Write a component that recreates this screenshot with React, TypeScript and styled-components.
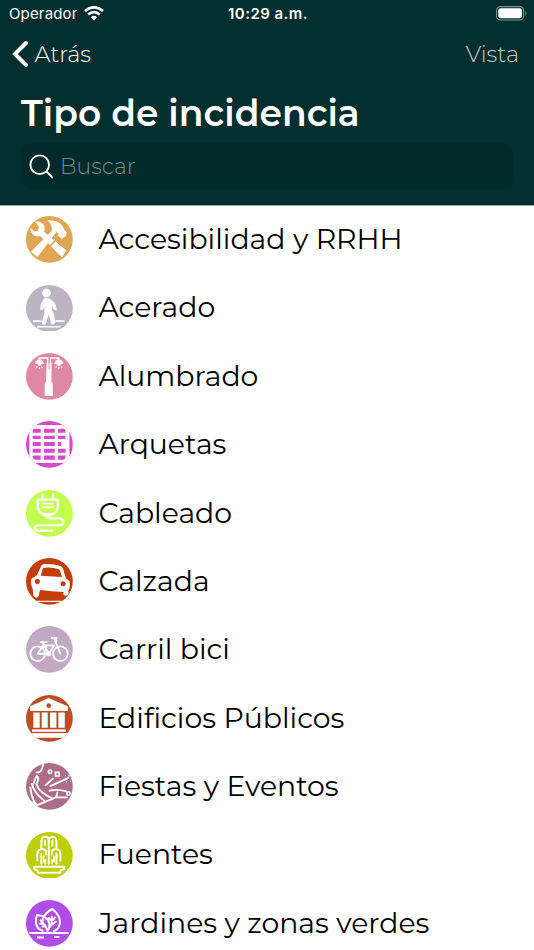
import React from 'react';
import styled, { createGlobalStyle } from 'styled-components';

const GlobalStyle = createGlobalStyle`
  * { box-sizing: border-box; }
  html, body { margin: 0; height: 100%; overflow: hidden; background: #fff; }
  body { font-family: Montserrat, Inter, "Open Sans", sans-serif; color: #000; }
`;

const Screen = styled.div`
  height: 100vh;
  display: flex;
  flex-direction: column;
  overflow: hidden;
`;

const Header = styled.header`
  flex: none;
  height: 206px;
  display: flex;
  flex-direction: column;
  background: #012e2e;
  color: #fff;
  border-bottom: 1px solid #8fa5a4;
`;

const StatusBar = styled.div`
  height: 28px;
  display: grid;
  grid-template-columns: 1fr auto 1fr;
  align-items: center;
  padding: 0 7px 0 9px;
  font-family: Inter, sans-serif;
  font-size: 15px;
  line-height: 28px;
`;

const Carrier = styled.div`
  display: flex;
  align-items: center;
  gap: 6px;
  letter-spacing: 0.15px;
  svg { margin-top: -2px; }
`;

const Clock = styled.time`
  font-weight: 600;
  letter-spacing: 0.44px;
`;

const Battery = styled.svg`
  justify-self: end;
  margin-top: -1px;
`;

const NavBar = styled.nav`
  height: 52px;
  display: flex;
  align-items: center;
  justify-content: space-between;
  padding: 0 15px 0 12px;
`;

const NavButton = styled.button<{ $dim?: boolean }>`
  display: flex;
  align-items: center;
  gap: 5.5px;
  padding: 0;
  border: 0;
  background: none;
  color: ${(p) => (p.$dim ? '#c0cbcb' : '#fff')};
  font: 300 22.5px/28px Montserrat, Inter, sans-serif;
`;

const Title = styled.h1`
  margin: 10px 0 0 21px;
  font-size: 36px;
  font-weight: 600;
  line-height: 46px;
  letter-spacing: 0.04px;
  white-space: nowrap;
`;

const SearchField = styled.label`
  height: 46px;
  margin: 7px 21px 0;
  padding: 2px 0 0 8px;
  display: flex;
  align-items: center;
  gap: 6px;
  border-radius: 10px;
  background: #012b2a;
  font-size: 22px;
  font-weight: 300;
  line-height: 44px;
  color: #748b8a;
  svg { margin-top: -1px; }
`;

const List = styled.ul`
  flex: 1;
  margin: -0.5px 0 0;
  padding: 0;
  list-style: none;
`;

const Row = styled.li`
  height: 68.36px;
  display: flex;
  align-items: center;
  padding-left: 25.8px;
  gap: 25.8px;
`;

const Icon = styled.svg`
  flex: none;
  width: 46.8px;
  height: 46.8px;
  fill: none;
  stroke: #fff;
  stroke-linecap: round;
  stroke-linejoin: round;
`;

const Label = styled.span`
  padding-bottom: 1.2px;
  font-size: 28.3px;
  line-height: 34px;
  font-variant-ligatures: none;
  white-space: nowrap;
`;

interface Category {
  label: string;
  color: string;
  cy: number;
  art: React.ReactNode;
}

const categories: Category[] = [
  {
    label: 'Accesibilidad y RRHH', color: '#dea555', cy: 89,
    art: (
      <g fill="#fff" stroke="none">
        <path d="M60 36Q74 32 84 43Q92 53 87 66L152 122L140 142L119 119L75 79Q62 83 53 74Q45 65 46 55L58 65L69 63L72 51Z" />
        <path d="M102 97L119 88L127 101L154 122L141 142L118 121Z" />
        <path d="M97 32Q122 30 138 44Q147 52 147 61L155 67L152 79L141 87L128 78L130 71L124 67L67 142L48 126L110 63Q113 46 97 32Z" />
        <path d="M125 88L106 108" stroke="#dea555" strokeWidth="5" />
      </g>
    ),
  },
  {
    label: 'Acerado', color: '#bcb4c2', cy: 91,
    art: (
      <g fill="#fff" stroke="none">
        <circle cx="94" cy="45" r="13" />
        <path d="M87 61Q98 56 109 65L119 75Q124 85 125 94Q120 100 115 93L112 83L111 97L117 107L121 133Q115 144 108 136L104 120L100 110L94 134Q88 144 81 137L81 130L88 106L88 84L85 92Q79 99 75 93L78 77Z" />
        <path d="M56 129H78M123 129H147M68 146H134" stroke="#fff" strokeWidth="5" />
      </g>
    ),
  },
  {
    label: 'Alumbrado', color: '#df88a6', cy: 92,
    art: (
      <g fill="#fff" stroke="none">
        <path d="M73 43V37H98V72M131 43V37H106V72" fill="none" stroke="#fff" strokeWidth="5" strokeLinejoin="miter" />
        <path d="M95 52H109V110H113V151H89V110H93Z" />
        <path d="M60 55Q61 43 73 41Q86 43 86 55ZM118 55Q119 43 131 41Q144 43 144 55Z" />
        <path d="M66 55Q73 67 80 55ZM124 55Q131 67 138 55Z" />
        <path d="M66 63L64 66M73 64V68M80 63L82 66M124 63L122 66M131 64V68M138 63L140 66" stroke="#fff" strokeWidth="3" />
        <path d="M102 37V70" stroke="#df88a6" strokeWidth="3" />
      </g>
    ),
  },
  {
    label: 'Arquetas', color: '#d54acb', cy: 89,
    art: (
      <g stroke="none">
        <rect x="43" y="31" width="120" height="114" rx="7" fill="#fff" />
        <path d="M59 42H77V54H53V49Q53 42 59 42M87 42H119V54H87ZM129 42H145Q151 42 151 49V54H129ZM53 63H77V73H53ZM87 63H119V73H87ZM129 63H151V73H129ZM53 82H77V94H53ZM87 82H119V94H87ZM129 82H138V94H129ZM53 102H77V114H53ZM87 102H119V114H87ZM129 102H151V114H129ZM53 122H77V135H60Q53 134 53 127ZM87 122H119V135H87ZM129 122H151V128Q150 135 144 135H129Z" fill="#d54acb" />
      </g>
    ),
  },
  {
    label: 'Cableado', color: '#c2ff4e', cy: 91,
    art: (
      <g strokeWidth="7">
        <path d="M82 34V48M114 34V48" />
        <path d="M68 50H128V72Q126 88 112 93H84Q70 88 68 72Z" />
        <path d="M82 62H114M82 73H114" strokeWidth="5" />
        <path d="M85 94L96 103L111 94" strokeWidth="6" />
        <path d="M98 98Q97 104 106 106H132Q145 107 145 116Q145 126 132 127H70Q59 127 59 134Q59 141 70 143H111" />
      </g>
    ),
  },
  {
    label: 'Calzada', color: '#c43c08', cy: 91,
    art: (
      <g>
        <path d="M76 50Q79 40 89 39Q112 37 136 45Q145 49 147 65L153 82L163 90Q166 109 160 119V130Q151 137 145 130V123Q110 121 75 117L71 134Q64 145 55 135L53 113Q46 102 49 83L65 73Z" fill="#fff" stroke="none" />
        <path d="M84 51Q108 47 131 55Q137 60 140 78L77 74Z" fill="#c43c08" stroke="none" />
        <circle cx="67" cy="91" r="7.5" fill="#c43c08" stroke="none" />
        <circle cx="144" cy="98" r="7.5" fill="#c43c08" stroke="none" />
        <path d="M28 151H172" strokeWidth="4" />
      </g>
    ),
  },
  {
    label: 'Carril bici', color: '#c1a9c4', cy: 90,
    art: (
      <g strokeWidth="5.5">
        <circle cx="68" cy="103" r="22" /><circle cx="136" cy="103" r="22" />
        <path d="M68 103L84 78H118L101 103L82 68M136 103L117 56H110M117 56H124V64M68 103H101M77 68H95M76 83H94" />
        <circle cx="101" cy="103" r="5" fill="#fff" />
      </g>
    ),
  },
  {
    label: 'Edificios Públicos', color: '#bc4d25', cy: 91,
    art: (
      <g fill="#fff" stroke="none">
        <path d="M45 55L101 30L158 55V69H45Z" />
        <path d="M55 73H74V119H55ZM80 73H98V119H80ZM105 73H124V119H105ZM130 73H149V119H130Z" />
        <rect x="51" y="124" width="101" height="7" /><rect x="46" y="135" width="113" height="14" />
        <circle cx="101" cy="53" r="7" fill="#bc4d25" />
      </g>
    ),
  },
  {
    label: 'Fiestas y Eventos', color: '#ad6d88', cy: 89,
    art: (
      <g strokeWidth="5.5">
        <path d="M65 57Q75 62 64 82Q72 108 112 125M50 82Q60 112 87 131M46 92Q48 118 61 141M65 57L54 84M65 146L124 121L156 122M124 119L127 107M103 102Q125 96 153 104M106 88L157 65M91 86L113 66M44 134L64 142M64 47Q82 50 84 22" />
        <circle cx="105" cy="45" r="5" strokeWidth="5" /><circle cx="160" cy="110" r="5" strokeWidth="5" />
        <rect x="121" y="47" width="11" height="11" strokeWidth="5" />
        <path d="M151 56V57M159 63V64M166 73V74M154 75V76M162 57V58M150 68V69" strokeWidth="4" />
      </g>
    ),
  },
  {
    label: 'Fuentes', color: '#bdce05', cy: 91,
    art: (
      <g strokeWidth="6">
        <path d="M79 72V49Q80 35 92 35Q100 36 101 45Q102 36 112 35Q123 36 124 49V72M67 106V87Q68 74 79 72Q89 71 93 79V88M136 106V87Q135 74 124 72Q115 71 110 79V88M101 45V116M90 48V60M112 47V62M79 86V116M124 86V116" />
        <path d="M86 94V109M91 104V116M111 104V116M117 94V109" strokeWidth="5" />
        <path d="M58 125H147V132Q145 134 138 135L135 143H70L66 135Q58 134 58 130Z" />
      </g>
    ),
  },
  {
    label: 'Jardines y zonas verdes', color: '#b04ce8', cy: 91,
    art: (
      <g transform="translate(0 -204)" strokeWidth="6">
        <path d="M83 317Q65 311 63 294Q61 280 66 270Q98 273 103 296Q105 308 97 318M86 276Q94 260 112 252Q138 273 134 297Q130 314 116 318M97 318Q99 307 109 300L122 290M110 299V275M109 287L100 279M110 288L120 277M98 317Q91 298 77 286M83 291V281M86 296H75M92 304H82" />
        <path d="M45 324H158" />
        <path d="M66 337H87M117 336H133" strokeLinecap="butt" />
      </g>
    ),
  },
];

export default function App() {
  return (
    <Screen>
      <GlobalStyle />
      <Header>
        <StatusBar>
          <Carrier>
            Operador
            <svg width="20" height="15" viewBox="0 0 20 15" fill="none" stroke="#fff" strokeWidth="2.7">
              <path d="M1 5Q10 -2.4 19 5M4.2 8.5Q10 3.7 15.8 8.5" />
              <path d="M6.8 11.2Q10 8.5 13.2 11.2L10 14.5Z" fill="#fff" stroke="none" />
            </svg>
          </Carrier>
          <Clock>10:29 a.m.</Clock>
          <Battery width="31" height="15" viewBox="0 0 31 15">
            <rect x="0.6" y="0.6" width="27" height="13.4" rx="3.8" fill="none" stroke="#7d9493" strokeWidth="1.1" />
            <rect x="2.3" y="2.3" width="23.6" height="10" rx="2.3" fill="#fff" />
            <path d="M29.3 5Q31.4 7.4 29.3 10Z" fill="#7d9493" />
          </Battery>
        </StatusBar>
        <NavBar>
          <NavButton>
            <svg width="17" height="28" viewBox="0 0 17 28" fill="none" stroke="#fff" strokeWidth="4" strokeLinecap="round">
              <path d="M14 3L3 14L14 25" />
            </svg>
            Atrás
          </NavButton>
          <NavButton $dim>Vista</NavButton>
        </NavBar>
        <Title>Tipo de incidencia</Title>
        <SearchField>
          <svg width="25" height="25" viewBox="0 0 25 25" fill="none" stroke="#fff" strokeWidth="1.8" strokeLinecap="round">
            <circle cx="10.7" cy="10.7" r="9.3" />
            <path d="M17.4 17.4L23.3 23.5" />
          </svg>
          Buscar
        </SearchField>
      </Header>
      <List>
        {categories.map((c) => (
          <Row key={c.label}>
            <Icon viewBox={`33 ${c.cy - 70} 140 140`}>
              <clipPath id={`disc-${c.label.slice(0, 4)}`}><circle cx="103" cy={c.cy} r="70" /></clipPath>
              <circle cx="103" cy={c.cy} r="70" fill={c.color} stroke="none" />
              <g clipPath={`url(#disc-${c.label.slice(0, 4)})`}>{c.art}</g>
            </Icon>
            <Label>{c.label}</Label>
          </Row>
        ))}
      </List>
    </Screen>
  );
}
